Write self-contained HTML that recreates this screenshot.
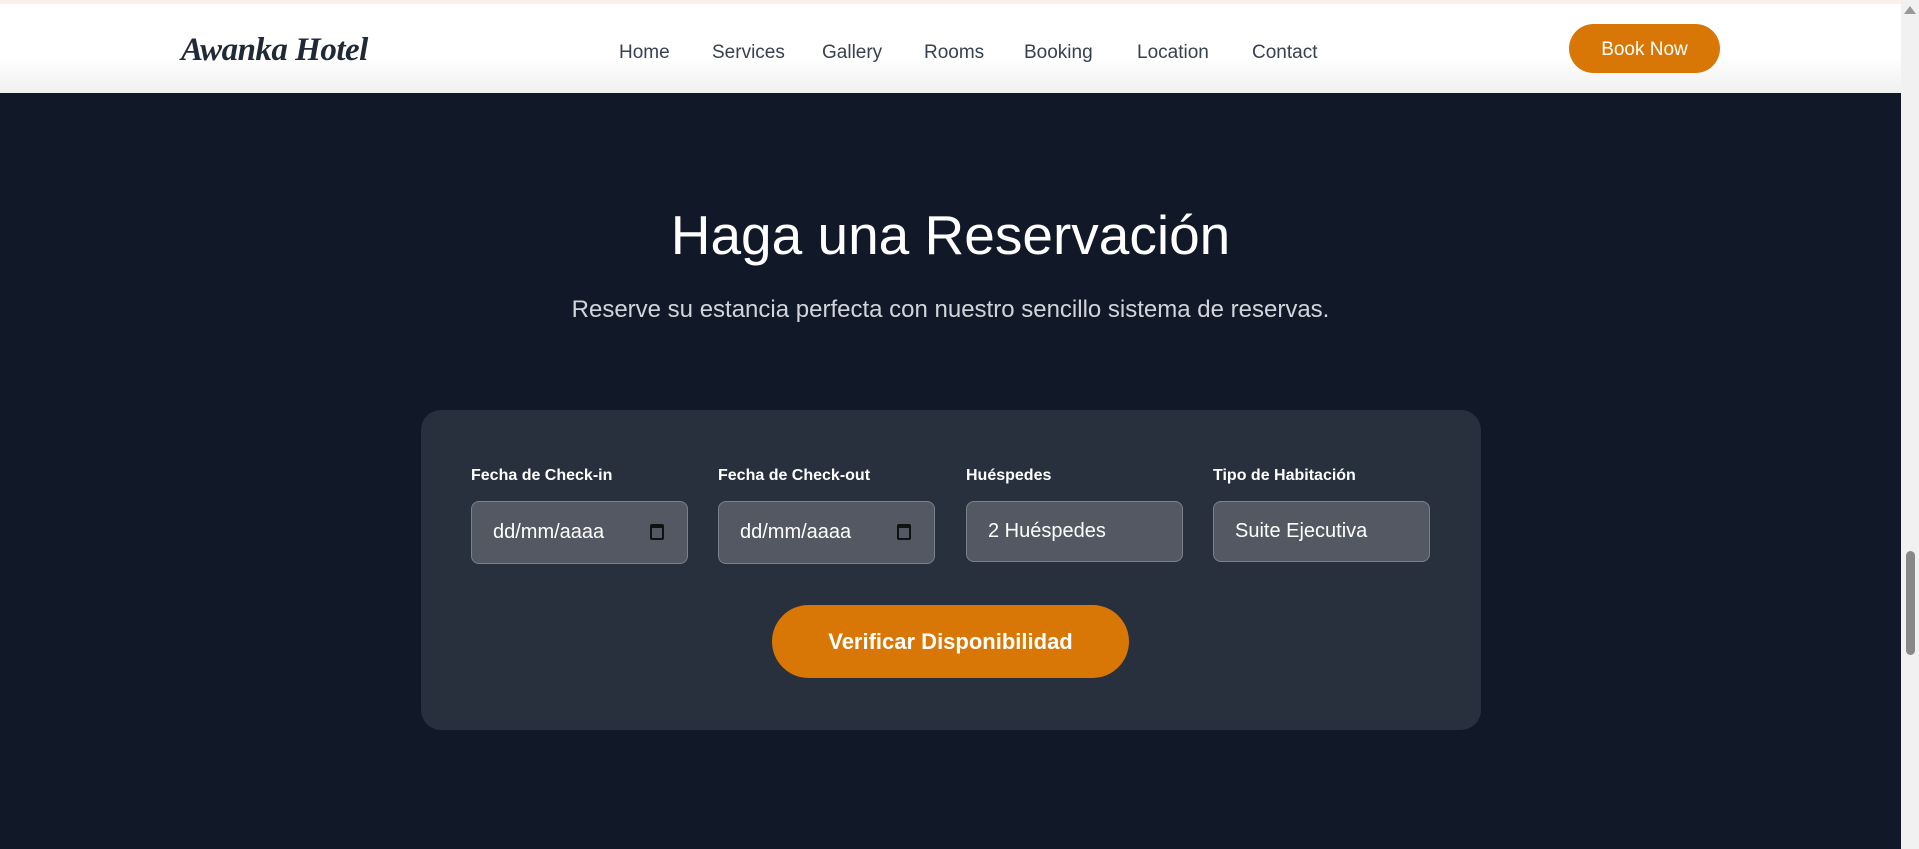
<!DOCTYPE html>
<html><head><meta charset="utf-8"><style>
*{box-sizing:border-box;margin:0;padding:0}
html,body{width:1919px;height:849px;overflow:hidden;background:#111827;font-family:"Liberation Sans",sans-serif}
.top{position:absolute;left:0;top:0;width:1901px;height:4px;background:#fdf0ec}
header{position:absolute;left:0;top:4px;width:1901px;height:89px;background:linear-gradient(#fff 60%,#f0f0f0)}
.logo{position:absolute;left:181px;top:28px;font-family:"Liberation Serif",serif;font-style:italic;font-weight:bold;font-size:33px;color:#1f2937;letter-spacing:-0.5px}
nav a{position:absolute;top:38px;font-size:19px;color:#374151;text-decoration:none}
.book{position:absolute;left:1569px;top:20px;width:151px;height:49px;border-radius:25px;background:#d97706;color:#fff;font-size:19px;text-align:center;line-height:51px}
.sb{position:absolute;left:1901px;top:0;width:18px;height:849px;background:#f1f1f1}
.thumb{position:absolute;left:1906px;top:551px;width:9px;height:104px;border-radius:5px;background:#888}
.arrow{position:absolute;left:1904px;top:6px;width:0;height:0;border-left:6px solid transparent;border-right:6px solid transparent;border-bottom:8px solid #999}
h1{position:absolute;left:0;width:1901px;top:203px;text-align:center;font-weight:300;font-size:55px;color:#fff}
.sub{position:absolute;left:0;width:1901px;top:296px;text-align:center;font-size:24px;color:#d1d5db}
.card{position:absolute;left:421px;top:410px;width:1060px;height:320px;border-radius:20px;background:#282f3d}
label{position:absolute;top:467px;font-size:16px;font-weight:bold;color:#fff}
.in{position:absolute;top:501px;width:217px;height:63px;background:#535862;border:1px solid #7b818b;border-radius:8px;color:#fff;font-size:20px;padding-left:21px;line-height:61px}
.cal{position:absolute;right:23px;top:22px;width:14px;height:16px;border:2px solid #111;border-top-width:4px;border-radius:2px}
.btn{position:absolute;left:772px;top:605px;width:357px;height:73px;border-radius:37px;background:#d97706;color:#fff;font-weight:bold;font-size:22px;text-align:center;line-height:73px}
</style></head><body>
<div class="top"></div>
<header>
<div class="logo">Awanka Hotel</div>
<nav>
<a style="left:619px">Home</a><a style="left:712px">Services</a><a style="left:822px">Gallery</a><a style="left:924px">Rooms</a><a style="left:1024px">Booking</a><a style="left:1137px">Location</a><a style="left:1252px">Contact</a>
</nav>
<div class="book">Book Now</div>
</header>
<div class="sb"></div><div class="arrow"></div><div class="thumb"></div>
<h1>Haga una Reservación</h1>
<div class="sub">Reserve su estancia perfecta con nuestro sencillo sistema de reservas.</div>
<div class="card"></div>
<label style="left:471px">Fecha de Check-in</label>
<label style="left:718px">Fecha de Check-out</label>
<label style="left:966px">Huéspedes</label>
<label style="left:1213px">Tipo de Habitación</label>
<div class="in" style="left:471px">dd/mm/aaaa<div class="cal"></div></div>
<div class="in" style="left:718px">dd/mm/aaaa<div class="cal"></div></div>
<div class="in" style="left:966px;height:61px;line-height:59px">2 Huéspedes</div>
<div class="in" style="left:1213px;height:61px;line-height:59px">Suite Ejecutiva</div>
<div class="btn">Verificar Disponibilidad</div>
</body></html>
